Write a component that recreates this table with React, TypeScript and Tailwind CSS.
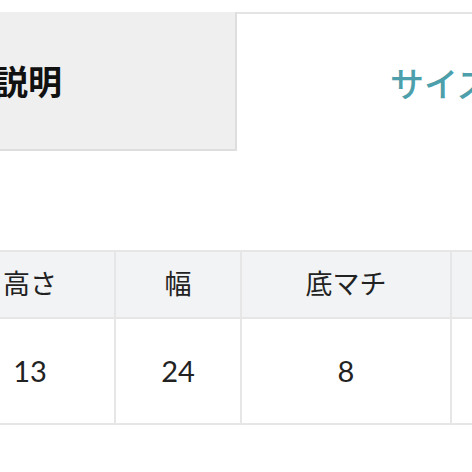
const cols = [
  { label: "高さ", value: "13", width: "w-[170px]" },
  { label: "幅", value: "24", width: "w-[126px]" },
  { label: "底マチ", value: "8", width: "w-[210px]" },
  { label: "持ち手", value: "40", width: "w-[260px]" },
];

export default function App() {
  return (
    <div
      className="h-[472px] w-[472px] overflow-hidden bg-white text-[#222]"
      style={{ fontFamily: '"Lato", "Noto Sans CJK JP", sans-serif' }}
    >
      {/* tabs */}
      <div className="mt-[12px] flex h-[139px] w-[900px]">
        <div className="flex w-[237px] shrink-0 items-center border-r-2 border-b-2 border-[#dedede] bg-[#efefef] pt-[2px]">
          <span className="ml-[-74px] text-[34px] leading-none font-bold whitespace-nowrap text-[#111]">
            商品説明
          </span>
        </div>
        <div className="flex flex-1 items-center border-t-2 border-[#e4e4e4] bg-white pl-[153px] pt-[2px]">
          <span className="text-[34px] leading-none font-medium whitespace-nowrap text-[#4c9fab]">
            サイズ表
          </span>
        </div>
      </div>

      {/* size table */}
      <div className="mt-[99px] ml-[-54px] flex w-[900px] border-t-2 border-b-2 border-[#e6e6e6]">
        {cols.map((c, i) => (
          <div
            key={c.label}
            className={`${c.width} shrink-0 ${i < cols.length - 1 ? "border-r-2 border-[#e6e6e6]" : ""}`}
          >
            <div className="flex h-[67px] items-center justify-center border-b-2 border-[#e6e6e6] bg-[#f2f3f5] text-[27px]">
              {c.label}
            </div>
            <div className="flex h-[104px] items-center justify-center text-[29px]">
              {c.value}
            </div>
          </div>
        ))}
      </div>
    </div>
  );
}
